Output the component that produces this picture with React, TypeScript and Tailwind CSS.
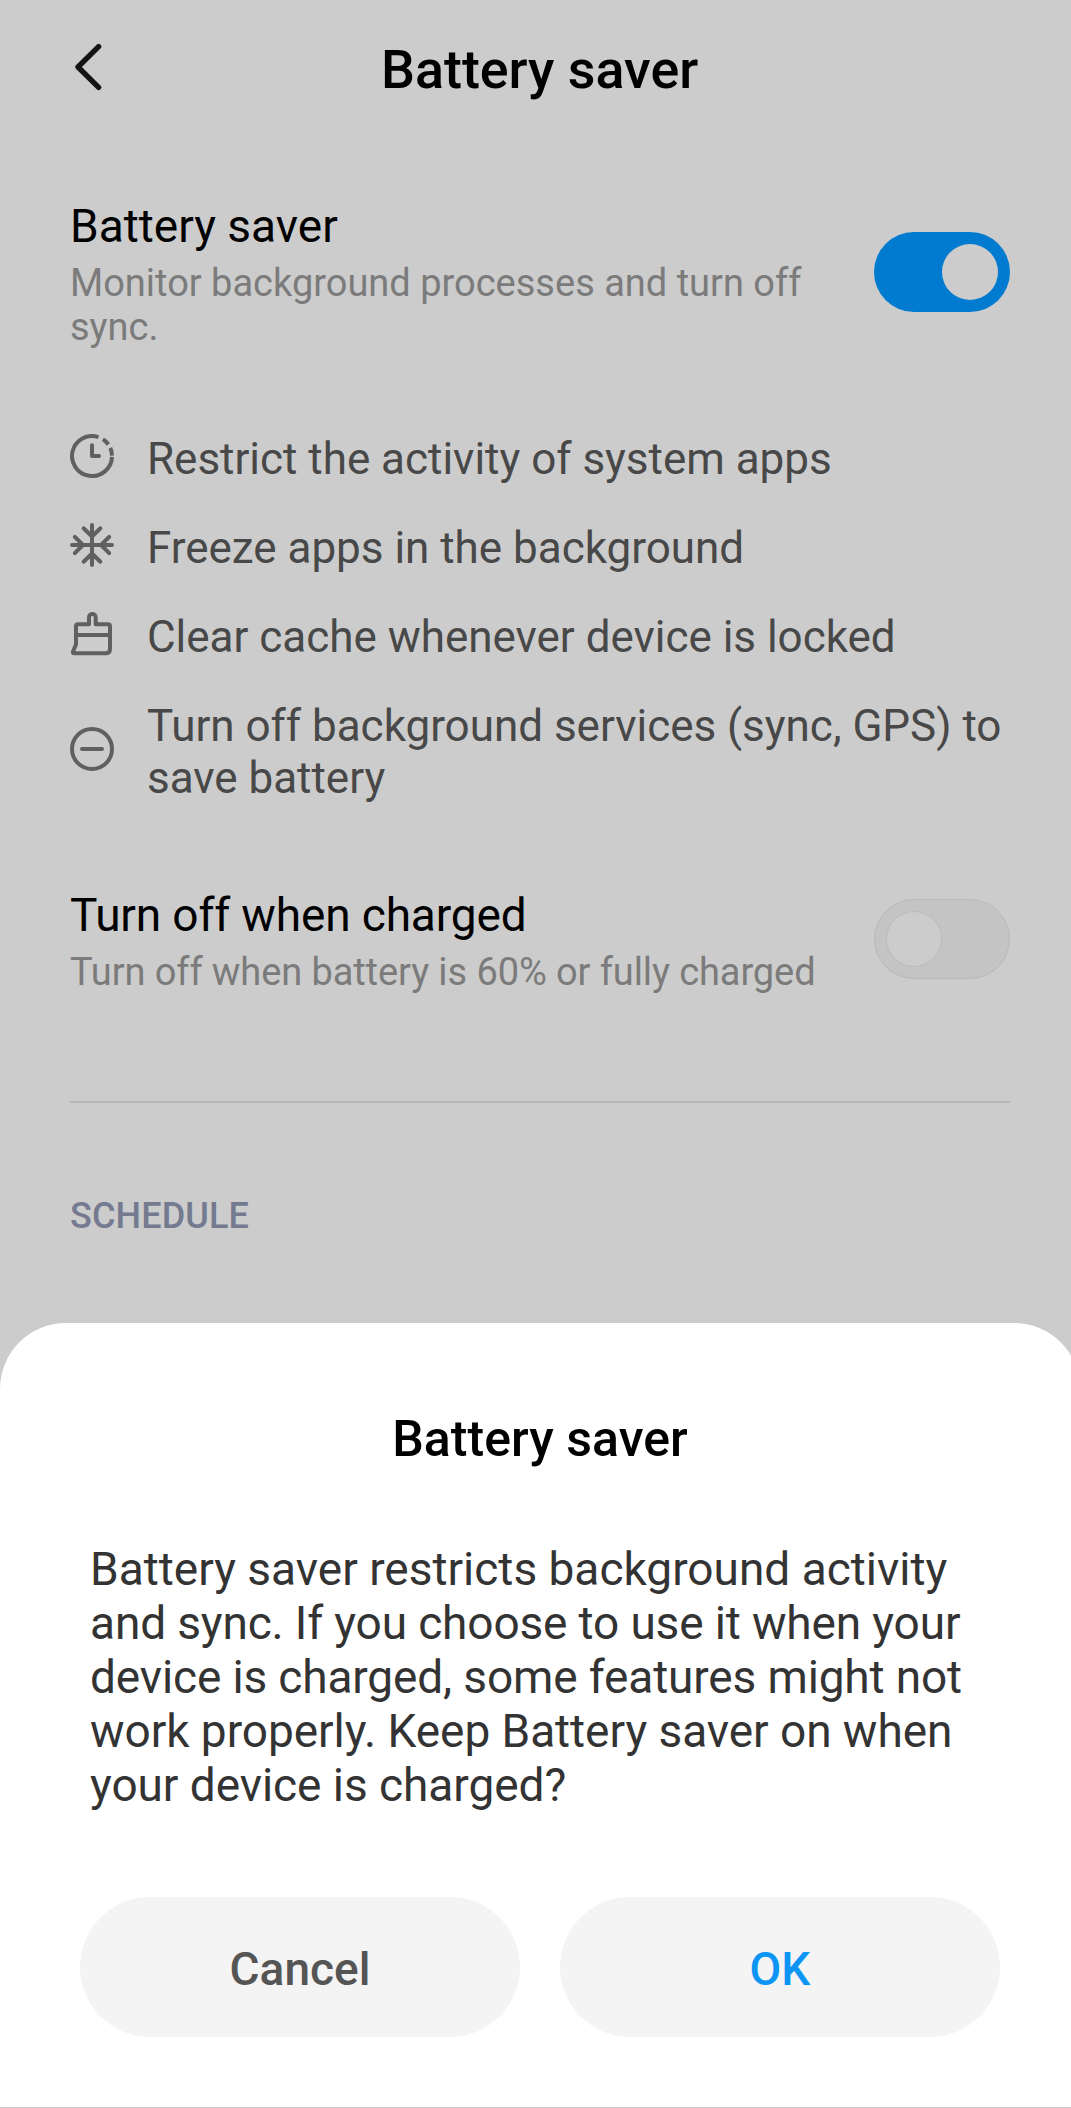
import React from "react";

function Toggle({ on = false }: { on?: boolean }) {
  return on ? (
    <div role="switch" aria-checked="true" className="flex h-20 w-[136px] shrink-0 items-center justify-end rounded-full bg-[#007bd0] pr-3">
      <div className="size-14 rounded-full bg-[#cccccc]" />
    </div>
  ) : (
    <div role="switch" aria-checked="false" className="flex h-20 w-[136px] shrink-0 items-center rounded-full border border-[#b9b9b9] bg-[#c4c4c4] pl-[11px]">
      <div className="size-14 rounded-full border border-[#bbbbbb] bg-[#cccccc]" />
    </div>
  );
}

function Icon({ children }: { children: React.ReactNode }) {
  return (
    <svg
      className="relative -top-[3px] mr-[33px] size-11 shrink-0"
      viewBox="0 0 44 44"
      fill="none"
      stroke="#606060"
      strokeWidth="4"
      strokeLinejoin="round"
    >
      {children}
    </svg>
  );
}

const features = [
  {
    lines: ["Restrict the activity of system apps"],
    icon: (
      <>
        <path d="M42 22.8A20 20 0 1 1 28.5 3.1M32.9 5.2A20 20 0 0 1 38.4 10.5M40.3 13.9A20 20 0 0 1 42 21.6" />
        <path d="M22 11.3V22H29" strokeLinecap="round" />
      </>
    ),
  },
  {
    lines: ["Freeze apps in the background"],
    icon: (
      <path
        strokeLinecap="round"
        d="M22 2V42M2 22H42M13.6 5.3L22 13.5L30.4 5.3M13.6 38.7L22 30.5L30.4 38.7M4.8 13.8L13 22L4.8 30.2M39.2 13.8L31 22L39.2 30.2"
      />
    ),
  },
  {
    lines: ["Clear cache whenever device is locked"],
    icon: (
      <path d="M19 12.3V5.3a3.35 3.35 0 0 1 6.7 0V12.3H38q2 0 2 2V37q0 4.3-4.3 4.3H4.4q-2.2 0-1.2-2.2L6 32.5V14.3q0-2 2-2ZM6 23H40" />
    ),
  },
  {
    lines: ["Turn off background services (sync, GPS) to", "save battery"],
    icon: (
      <>
        <circle cx="22" cy="22" r="20" />
        <path d="M12 22H32" strokeLinecap="round" />
      </>
    ),
  },
];

const message = [
  { text: "Battery saver restricts background activity", tracking: "tracking-normal" },
  { text: "and sync. If you choose to use it when your", tracking: "tracking-[-0.145px]" },
  { text: "device is charged, some features might not", tracking: "tracking-[-0.14px]" },
  { text: "work properly. Keep Battery saver on when", tracking: "tracking-[-0.05px]" },
  { text: "your device is charged?", tracking: "tracking-[-0.05px]" },
];

function Setting({ title, lines, on }: { title: string; lines: string[]; on?: boolean }) {
  return (
    <section className="flex justify-between pr-[61px] pl-[70px]">
      <div className="whitespace-nowrap">
        <h2 className={on ? "text-[46px] leading-[60px]" : "text-[46px] leading-[60px] tracking-[-0.15px]"}>{title}</h2>
        <div
          className={
            on
              ? "mt-[5px] text-[38px] leading-[44px] text-[#7b7b7b]"
              : "mt-[5px] text-[38px] leading-[44px] tracking-[-0.09px] text-[#7b7b7b]"
          }
        >
          {lines.map((l) => (
            <p key={l}>{l}</p>
          ))}
        </div>
      </div>
      <div className={on ? "mt-9" : "mt-3.5"}>
        <Toggle on={on} />
      </div>
    </section>
  );
}

export default function App() {
  return (
    <div className="relative h-[2108px] w-[1071px] overflow-hidden bg-[#cccccc] font-[Roboto,sans-serif] text-black">
      <header className="flex h-[196px] items-start pl-[70px]">
        <svg className="mt-[42px] h-[50px] w-9" viewBox="0 0 36 50" fill="none" stroke="#141414" strokeWidth="5.4" strokeLinecap="round" strokeLinejoin="round">
          <path d="M28.6 4.7L8 25L28.6 45.3" />
        </svg>
        <h1 className="mt-[38px] ml-[275px] text-[53.8px] leading-[64px] font-medium whitespace-nowrap">Battery saver</h1>
      </header>

      <Setting title="Battery saver" lines={["Monitor background processes and turn off", "sync."]} on />

      <ul className="mt-[84px] mb-[81px] flex flex-col gap-[37px] pl-[70px] text-[44px] leading-[52px] tracking-[-0.02px] whitespace-nowrap text-[#484848]">
        {features.map((f) => (
          <li key={f.lines[0]} className="flex items-center">
            <Icon>{f.icon}</Icon>
            <div>
              {f.lines.map((l) => (
                <p key={l}>{l}</p>
              ))}
            </div>
          </li>
        ))}
      </ul>

      <Setting title="Turn off when charged" lines={["Turn off when battery is 60% or fully charged"]} />

      <hr className="mt-[107px] mr-[61px] ml-[70px] h-0.5 border-0 bg-[#b6b6b6]" />
      <h3 className="mt-[91px] ml-[70px] text-4xl leading-[44px] font-medium tracking-[0.12px] text-[#747a8f]">SCHEDULE</h3>

      <div role="dialog" className="absolute bottom-px left-0 flex h-[784px] w-[1080px] flex-col rounded-t-[66px] bg-white px-20 pt-[86px]">
        <h2 className="text-center text-[50px] leading-[60px] font-medium tracking-[0.06px]">Battery saver</h2>
        <div className="mt-[73px] pl-2.5 text-[46px] leading-[54px] whitespace-nowrap text-[#333333]">
          {message.map((m) => (
            <p key={m.text} className={m.tracking}>{m.text}</p>
          ))}
        </div>
        <div className="mt-[85px] flex gap-10 text-[46px] font-medium">
          <button className="h-[140px] flex-1 rounded-full bg-[#f4f4f4] pt-1 text-[#555555]">Cancel</button>
          <button className="h-[140px] flex-1 rounded-full bg-[#f4f4f4] pt-1 text-[#0d95f5]">OK</button>
        </div>
      </div>
    </div>
  );
}
